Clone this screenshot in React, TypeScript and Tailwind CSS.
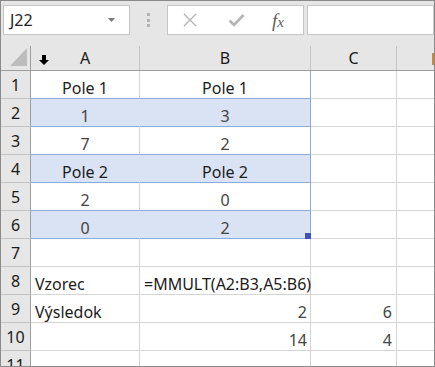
import React from 'react';

type Row = {
  n: number;
  a?: string;
  b?: string;
  c?: string;
  table?: boolean;
  hl?: boolean;
  center?: boolean;
  handle?: boolean;
};

const rows: Row[] = [
  { n: 1, a: 'Pole 1', b: 'Pole 1', table: true, center: true },
  { n: 2, a: '1', b: '3', table: true, hl: true, center: true },
  { n: 3, a: '7', b: '2', table: true, center: true },
  { n: 4, a: 'Pole 2', b: 'Pole 2', table: true, hl: true, center: true },
  { n: 5, a: '2', b: '0', table: true, center: true },
  { n: 6, a: '0', b: '2', table: true, hl: true, center: true, handle: true },
  { n: 7 },
  { n: 8, a: 'Vzorec', b: '=MMULT(A2:B3,A5:B6)' },
  { n: 9, a: 'Výsledok', b: '2', c: '6' },
  { n: 10, b: '14', c: '4' },
  { n: 11 },
];

const isText = (s?: string) => !!s && /[A-Za-z]/.test(s);

const DownArrow = () => (
  <svg width="10" height="10" viewBox="0 0 10 10" className="absolute left-[8px] top-[9px]">
    <path d="M3 0h4v5h3L5 10 0 5h3z" fill="#000" />
  </svg>
);

const Toolbar = () => (
  <div className="h-[45px] shrink-0 flex items-start pt-[4px] pl-[2px] bg-[#e6e6e6]">
    <div className="w-[127px] h-[30px] bg-white border border-[#c6c6c6] flex items-center pl-[6px] pr-[14px] justify-between">
      <span className="text-[16px] text-[#222] leading-none">J22</span>
      <svg width="7" height="4" viewBox="0 0 7 4">
        <path d="M0 0h7L3.5 4z" fill="#7a7a7a" />
      </svg>
    </div>
    <div className="w-[37px] h-[30px] flex flex-col items-center pt-[8px] gap-[2.5px]">
      <div className="w-[3px] h-[3px] bg-[#b4b4b4]" />
      <div className="w-[3px] h-[3px] bg-[#b4b4b4]" />
      <div className="w-[3px] h-[3px] bg-[#b4b4b4]" />
    </div>
    <div className="w-[137px] h-[30px] bg-white border border-[#c6c6c6] flex items-center">
      <svg width="16" height="14" viewBox="0 0 16 14" className="ml-[14px]">
        <path d="M2 1l12 12M14 1L2 13" stroke="#b5b5b5" strokeWidth="1.4" />
      </svg>
      <svg width="17" height="14" viewBox="0 0 17 14" className="ml-[30px]">
        <path d="M1.5 7.5l4.5 4.5L15.5 2" stroke="#b5b5b5" strokeWidth="2.6" fill="none" />
      </svg>
      <span className="ml-[27px] text-[19px] italic text-[#5f5f5f] leading-none font-['Liberation_Serif',serif]">
        f<span className="text-[15px]">x</span>
      </span>
    </div>
    <div className="flex-1 h-[30px] ml-[3px] bg-white border border-[#c6c6c6]" />
  </div>
);

export default function App() {
  return (
    <div className="w-[435px] h-[367px] overflow-hidden border border-[#8a8a8a] bg-white font-['Noto_Sans',sans-serif] flex flex-col">
      <Toolbar />
      <div className="shrink-0 grid grid-cols-[30px_109px_171px_86px_1fr] h-[25px] bg-[#e6e6e6] border-b border-[#9e9e9e] text-[16px] text-[#1a1a1a]">
        <div className="relative border-r border-[#9e9e9e]">
          <svg width="17" height="18" viewBox="0 0 17 18" className="absolute left-[9px] top-[2px]">
            <path d="M17 0v18H0z" fill="#bdbdbd" />
          </svg>
        </div>
        <div className="relative border-r border-[#c4c4c4] flex items-center justify-center">
          <DownArrow />
          A
        </div>
        <div className="border-r border-[#c4c4c4] flex items-center justify-center">B</div>
        <div className="border-r border-[#c4c4c4] flex items-center justify-center">C</div>
        <div className="relative">
          <div className="absolute right-0 top-[7px] w-[2px] h-[12px] bg-[#c8893b]" />
        </div>
      </div>
      <div className="shrink-0 grid grid-cols-[30px_109px_171px_86px_1fr] auto-rows-[28px] text-[16px]">
        {rows.map((r) => {
          const aCls = r.table
            ? r.hl
              ? 'bg-[#dae3f3] border-b border-r border-b-[#8eaadb] border-r-[#dae3f3]'
              : 'border-b border-r border-b-[#8eaadb] border-r-[#d4d4d4]'
            : 'border-b border-r border-[#d4d4d4]';
          const bCls = r.table
            ? r.hl
              ? 'bg-[#dae3f3] border-b border-r border-[#8eaadb]'
              : 'border-b border-r border-[#8eaadb]'
            : 'border-b border-r border-[#d4d4d4]';
          const align = (s?: string) =>
            r.center ? 'justify-center' : isText(s) ? 'justify-start pl-[4px]' : 'justify-end pr-[3px]';
          const color = (s?: string) => (isText(s) ? 'text-[#1c1c1c]' : 'text-[#444]');
          return (
            <React.Fragment key={r.n}>
              <div className="bg-[#e6e6e6] border-b border-r border-b-[#c4c4c4] border-r-[#9e9e9e] flex items-center justify-center text-[#1a1a1a] text-[16px]">
                {r.n}
              </div>
              <div className={`${aCls} flex items-end leading-[20px] ${align(r.a)} ${color(r.a)}`}>{r.a}</div>
              <div className={`${bCls} relative flex items-end leading-[20px] whitespace-nowrap ${align(r.b)} ${color(r.b)}`}>
                {r.b}
                {r.handle && <div className="absolute right-[-1px] bottom-[-1px] w-[6px] h-[6px] bg-[#4152b0]" />}
              </div>
              <div className={`border-b border-r border-[#d4d4d4] flex items-end leading-[20px] justify-end pr-[4px] ${color(r.c)}`}>
                {r.c}
              </div>
              <div className="border-b border-[#d4d4d4]" />
            </React.Fragment>
          );
        })}
      </div>
    </div>
  );
}
